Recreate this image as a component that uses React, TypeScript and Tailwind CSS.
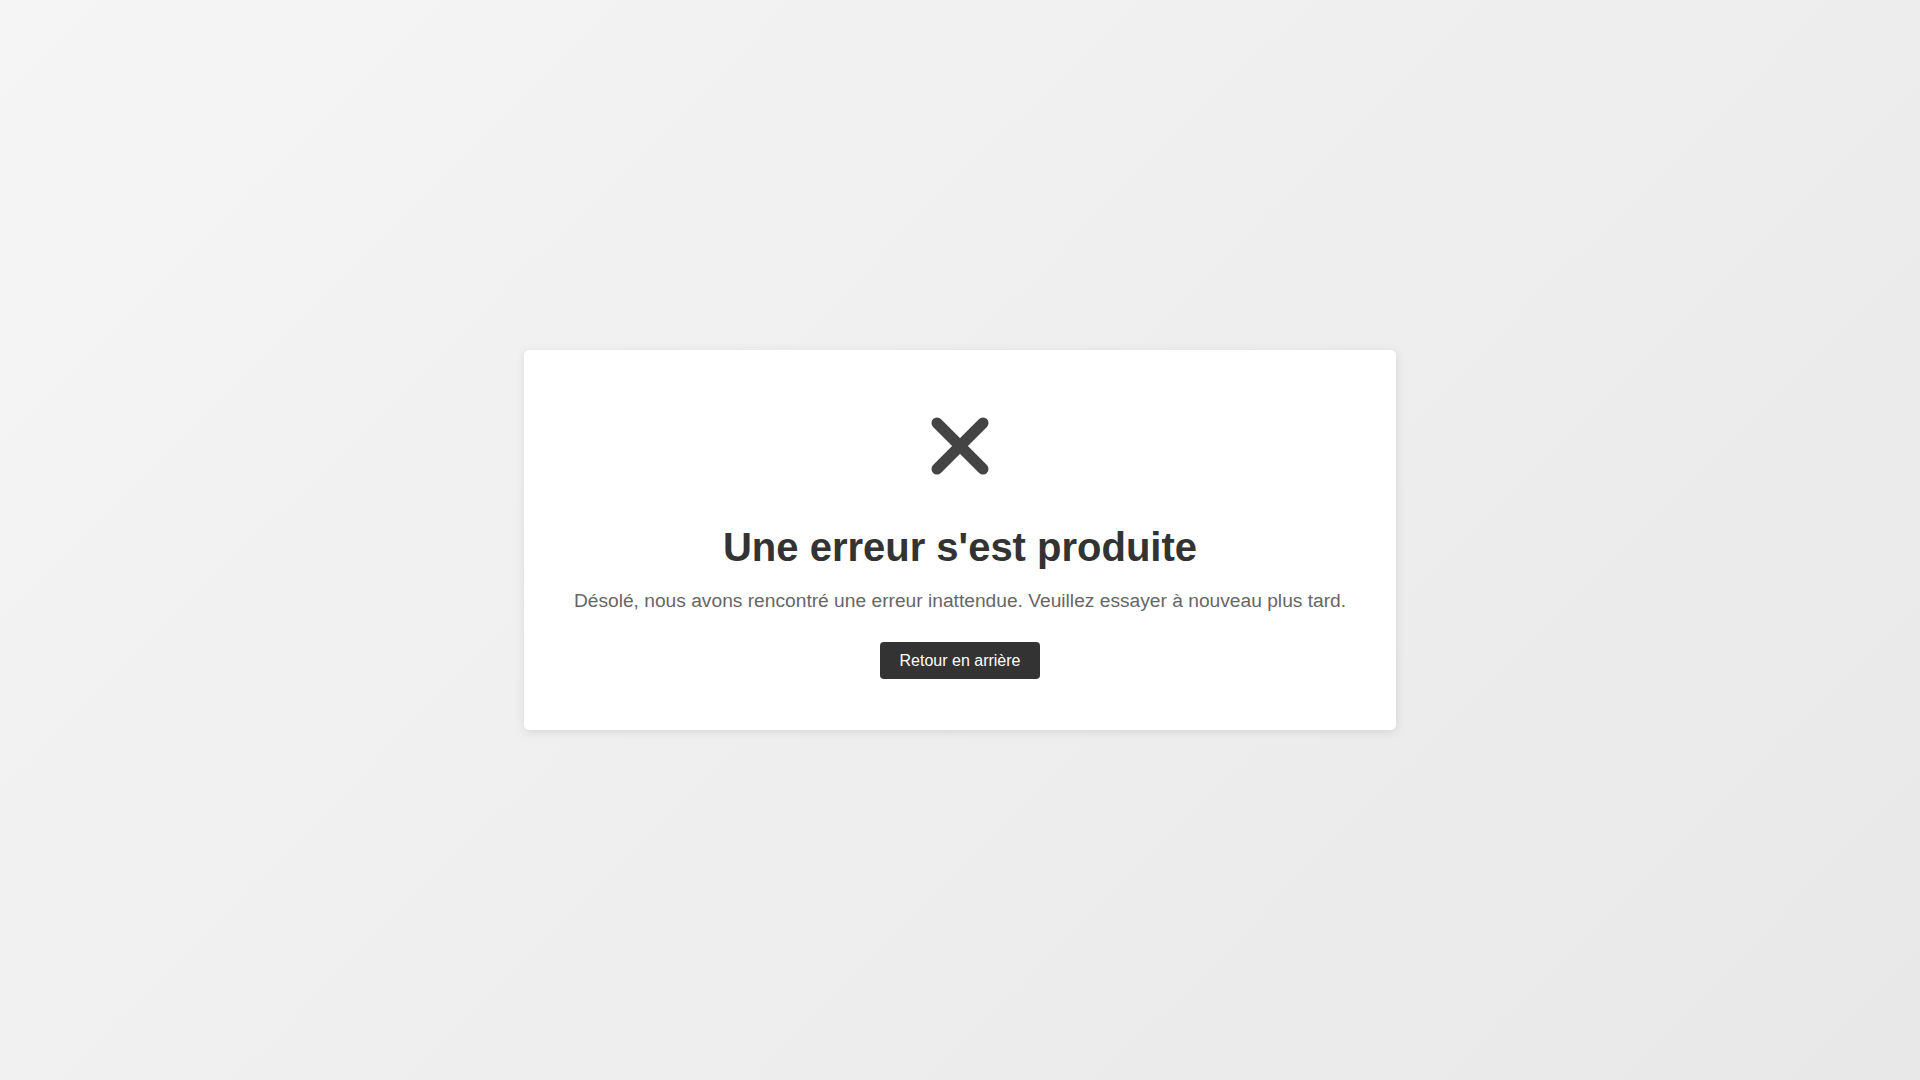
export default function App() {
  return (
    <div
      className="min-h-screen w-full flex items-center justify-center bg-[linear-gradient(135deg,#f5f5f5_0%,#e8e8e8_100%)]"
      style={{ fontFamily: '"Liberation Sans", Arial, sans-serif' }}
    >
      <div className="w-[872px] h-[380px] bg-white rounded-[5px] shadow-[0_2px_10px_rgba(0,0,0,0.1)] flex flex-col items-center pt-[67px]">
        <svg width="58" height="58" viewBox="0 0 58 58" className="shrink-0">
          <path
            d="M6 6 L52 52 M52 6 L6 52"
            stroke="#444444"
            strokeWidth="11"
            strokeLinecap="round"
            fill="none"
          />
        </svg>
        <h1 className="mt-[49px] text-[40px] leading-[46px] font-bold text-[#333333]">
          Une erreur s'est produite
        </h1>
        <p className="mt-[20px] text-[19.2px] leading-[22px] text-[#666666]">
          Désolé, nous avons rencontré une erreur inattendue. Veuillez essayer à nouveau plus tard.
        </p>
        <button className="mt-[30px] h-[37px] px-[20px] bg-[#333333] text-white text-[16px] rounded-[4px]">
          Retour en arrière
        </button>
      </div>
    </div>
  );
}
